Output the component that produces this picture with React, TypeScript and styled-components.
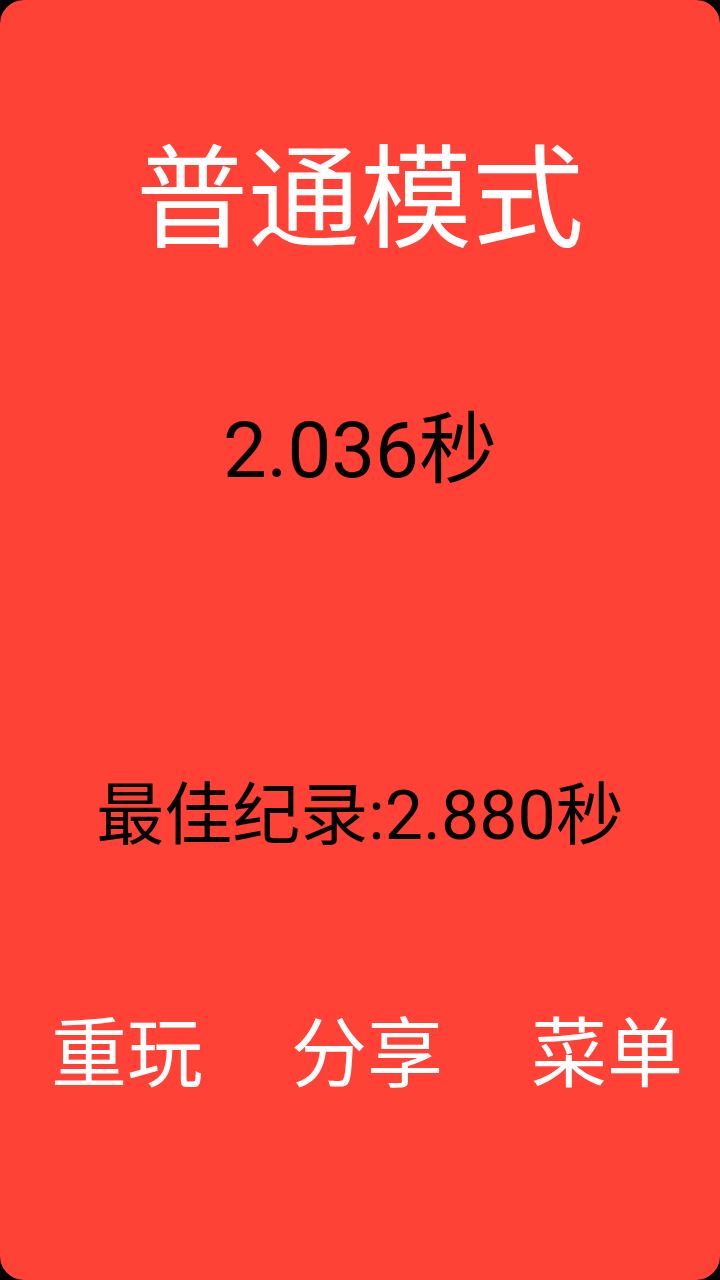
import React from "react";
import styled, { createGlobalStyle } from "styled-components";

const GlobalStyle = createGlobalStyle`
  html, body {
    margin: 0;
    padding: 0;
    background: #000000;
  }
  body {
    font-family: Roboto, "Noto Sans CJK SC", sans-serif;
  }
`;

const Screen = styled.div`
  width: 720px;
  height: 1280px;
  box-sizing: border-box;
  background: #ff4136;
  border-radius: 24px;
  overflow: hidden;
  display: flex;
  flex-direction: column;
  align-items: center;
  padding-top: 145px;
  font-family: Roboto, "Noto Sans CJK SC", sans-serif;
`;

const Title = styled.h1`
  margin: 0;
  font-size: 112px;
  line-height: 1;
  font-weight: 400;
  color: #ffffff;
  white-space: nowrap;
`;

const Label = styled.div<{ $size: number; $top: number }>`
  margin-top: ${(p) => p.$top}px;
  font-size: ${(p) => p.$size}px;
  line-height: 1;
  color: #000000;
  white-space: nowrap;
`;

const ButtonRow = styled.div`
  margin-top: 167px;
  width: 100%;
  box-sizing: border-box;
  padding-left: 14px;
  display: flex;
  justify-content: center;
  gap: 88px;
`;

const ActionButton = styled.button`
  border: none;
  background: transparent;
  padding: 0;
  margin: 0;
  font-family: inherit;
  font-size: 76px;
  line-height: 1;
  color: #ffffff;
  white-space: nowrap;
  cursor: pointer;
`;

export default function App() {
  return (
    <>
      <GlobalStyle />
      <Screen>
        <Title>普通模式</Title>
        <Label $size={78} $top={155}>2.036秒</Label>
        <Label $size={68} $top={292}>最佳纪录:2.880秒</Label>
        <ButtonRow>
          <ActionButton>重玩</ActionButton>
          <ActionButton>分享</ActionButton>
          <ActionButton>菜单</ActionButton>
        </ButtonRow>
      </Screen>
    </>
  );
}
